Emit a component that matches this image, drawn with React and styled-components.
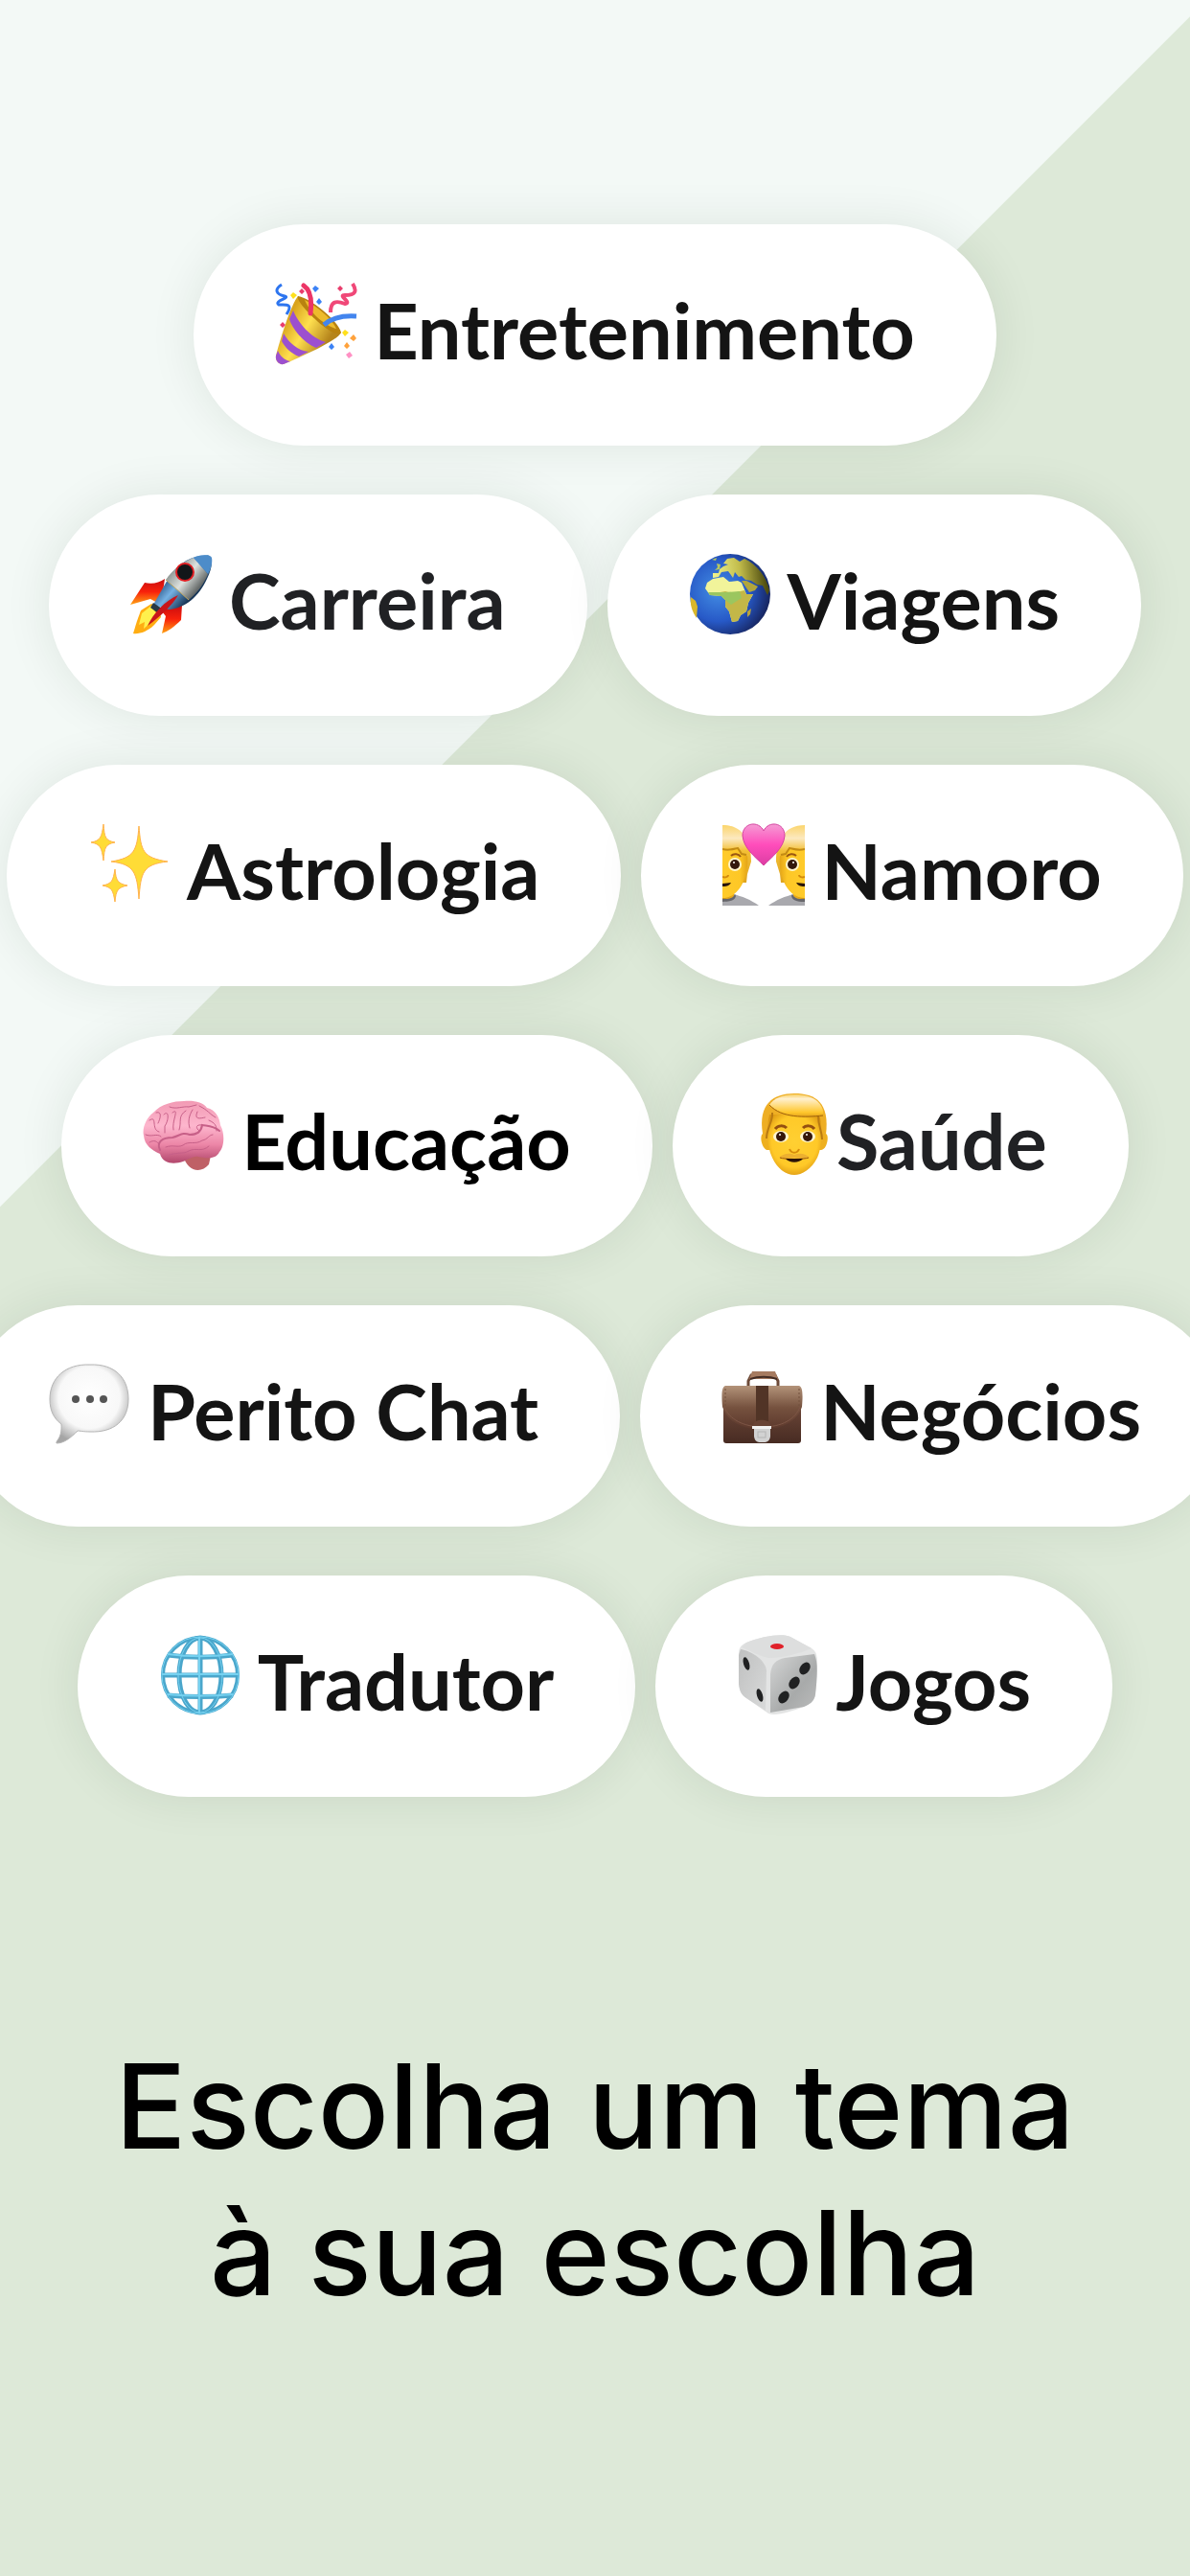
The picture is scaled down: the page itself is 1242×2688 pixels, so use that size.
import React from "react";
import styled, { createGlobalStyle } from "styled-components";

const GlobalStyle = createGlobalStyle`
    body {
        margin: 0;
    }
`

//styled
const Wrapper = styled.div`
    box-sizing: border-box;
    min-height: 100vh;
    padding-top: 234px;
    overflow: hidden;
    background: linear-gradient(135deg, #F3F9F6 890px, #DDE9D8 891px);
`
const TopicList = styled.div`
    display: flex;
    flex-direction: column;
    gap: 51px;
`
const TopicRow = styled.div`
    display: flex;
    justify-content: center;
    gap: 21px;
`
const TopicButton = styled.button`
    display: flex;
    flex-shrink: 0;
    align-items: flex-start;
    gap: ${(props) => (props.$tight ? 0 : 17)}px;
    height: 231px;
    padding: 61px 85px 0;
    border: 0;
    border-radius: 116px;
    background: #FFFFFF;
    box-shadow: 0 0 50px rgba(0, 40, 20, 0.09);
    font-family: Lato, "Open Sans", sans-serif;
    font-size: 81px;
    font-weight: 700;
    line-height: 98px;
    color: ${(props) => props.$color || "#141414"};
    white-space: nowrap;
    cursor: pointer;
`
const Icon = styled.svg`
    flex-shrink: 0;
    width: 86px;
    height: 86px;
`
const Title = styled.h1`
    margin: 246px 0 0;
    font-family: Inter, Roboto, sans-serif;
    font-size: 123px;
    font-weight: 500;
    line-height: 153px;
    text-align: center;
    color: #000000;
`

function PartyIcon() {
    return (
        <Icon viewBox="0 0 86 86" fill="none">
            <defs>
                <linearGradient id="cone" x1="8" y1="45" x2="50" y2="70" gradientUnits="userSpaceOnUse">
                    <stop offset="0" stopColor="#D9A31D" />
                    <stop offset="0.45" stopColor="#FFE04F" />
                    <stop offset="1" stopColor="#B5841B" />
                </linearGradient>
            </defs>
            <path d="M24 14L69 52C66 60 26 78 9 85C4 86 0 81 1 76C7 53 17 23 24 14Z" fill="url(#cone)" />
            <path d="M24 14C35 15 66 39 69 52C65 56 54 49 44 40C33 30 22 18 24 14Z" fill="#B8820F" />
            <path d="M31 18C43 24 59 37 64 48C57 47 38 35 31 18Z" fill="#EDBB2C" />
            <path d="M19 29C24 42 38 58 53 62L43 68C29 62 18 48 15 38Z" fill="#9C50CF" />
            <path d="M9 53C14 62 24 71 35 72L25 77C17 74 10 67 7 61Z" fill="#9C50CF" />
            <path d="M3 71C5 76 10 81 16 82L9 85C4 86 0 81 1 76Z" fill="#9C50CF" />
            <path d="M7 2C-1 7 1 12 10 14C17 16 -2 19 4 23C10 23 20 21 12 33" stroke="#2D75EF" strokeWidth="3" />
            <path d="M30 3C39 9 38 24 37 32" stroke="#EC3566" strokeWidth="5" strokeLinecap="round" />
            <path d="M81 1C86 9 84 13 73 13C65 13 81 21 73 22C63 18 58 20 58 31" stroke="#F04878" strokeWidth="4" />
            <path d="M51 44C59 37 71 34 85 35" stroke="#4385EE" strokeWidth="5" />
            <path d="M28 6l3 3-3 3-3-3zM68 3l3 3-3 3-3-3zM8 41l3 3-3 3-3-3z" fill="#E93D6D" />
            <path d="M42 3l4 3-4 4-3-4zM46 16l3 4-3 3-3-3zM59 63l3 4-3 3-3-3z" fill="#3B82F6" />
            <path d="M19 10l4 3-4 4-3-4zM73 49l4 3-4 4-3-4z" fill="#FFE01C" />
            <path d="M82 54l3 4-3 3-4-3zM75 62l3 4-3 3-3-3z" fill="#FFA23C" />
            <path d="M78 72l3 4-4 3-3-4z" fill="#FF91C4" />
        </Icon>
    )
}

function RocketIcon() {
    return (
        <Icon viewBox="0 0 86 86" fill="none">
            <defs>
                <linearGradient id="hull" x1="40" y1="22" x2="66" y2="43" gradientUnits="userSpaceOnUse">
                    <stop offset="0" stopColor="#8D9592" />
                    <stop offset="0.5" stopColor="#DDE1DE" />
                    <stop offset="1" stopColor="#656A69" />
                </linearGradient>
                <linearGradient id="hullBlue" x1="32" y1="34" x2="56" y2="55" gradientUnits="userSpaceOnUse">
                    <stop offset="0" stopColor="#315D8E" />
                    <stop offset="0.4" stopColor="#75B1E3" />
                    <stop offset="1" stopColor="#183657" />
                </linearGradient>
                <linearGradient id="fin" x1="0" y1="0" x2="0" y2="1">
                    <stop offset="0" stopColor="#C80C10" />
                    <stop offset="0.5" stopColor="#F8210B" />
                    <stop offset="1" stopColor="#FFA313" />
                </linearGradient>
            </defs>
            <path d="M36 27C30 31 23 33 15 31L0 54L21 48L32 54Z" fill="url(#fin)" />
            <path d="M54 54L53 70C46 77 39 82 33 84L37 66L30 57Z" fill="url(#fin)" />
            <path d="M22 53L11 60L7 71L3 84C9 85 18 82 25 75L32 67L30 57Z" fill="#FFAD12" />
            <path d="M22 55L12 63L9 75L15 72L14 79L29 66Z" fill="#FFF04D" />
            <path d="M40 26C50 10 65 2 81 2C87 4 86 15 80 27C72 45 57 58 40 59L24 54Z" fill="url(#hullBlue)" />
            <path d="M37 28C44 18 54 9 66 5L81 22C76 34 69 42 61 49Z" fill="url(#hull)" />
            <path d="M66 5C75 1 84 2 85 5C86 10 84 17 81 22Z" fill="#4D8CC9" />
            <circle cx="57" cy="20" r="10" fill="#E01D22" />
            <circle cx="57" cy="20" r="8" fill="#121619" />
            <path d="M37 28L61 49" stroke="#BFA45C" strokeWidth="1" />
            <path d="M24 52L33 58L29 63L21 57Z" fill="#273945" />
            <path d="M50 44C44 54 33 65 18 76C24 63 36 50 50 44Z" fill="#C9151A" />
        </Icon>
    )
}

function EarthIcon() {
    return (
        <Icon viewBox="0 0 86 86" fill="none">
            <defs>
                <radialGradient id="sea" cx="0.35" cy="0.45" r="0.65">
                    <stop offset="0" stopColor="#448FE4" />
                    <stop offset="0.6" stopColor="#2759C7" />
                    <stop offset="1" stopColor="#172662" />
                </radialGradient>
                <linearGradient id="land" x1="28" y1="30" x2="80" y2="24" gradientUnits="userSpaceOnUse">
                    <stop offset="0" stopColor="#EDF08A" />
                    <stop offset="0.5" stopColor="#C2BC4B" />
                    <stop offset="1" stopColor="#4F4D10" />
                </linearGradient>
            </defs>
            <circle cx="43" cy="43" r="42" fill="url(#sea)" />
            <path d="M25 26L25 21L31 21L32 17L36 14L41 12L36 11L40 6L47 5L53 9L58 6C71 12 81 25 84 39L82 44L77 34L71 33L65 29L59 28L55 24L52 25L48 20L46 26L41 19L34 20L31 25Z" fill="url(#land)" />
            <path d="M29 11l4 1-1 5-5 1 3-3zM24 7l5-2-1 3z" fill="#B5C661" />
            <path d="M25 27L36 25L42 30L51 29L55 31L60 43L67 43L62 52L60 61L54 65L51 71L45 72L42 61L38 56L38 49L34 45L22 44L17 37L19 31Z" fill="#F1F49A" />
            <path d="M22 43L38 40L45 42L58 39L60 43L67 43L62 52L60 61L54 65L51 71L45 72L42 61L38 56L38 49L34 45Z" fill="#C3B748" />
            <path d="M38 41L53 40L55 47L44 54L38 49L34 45L22 44L20 41Z" fill="#9BC65F" />
            <path d="M65 58l-1 6-3 3 0-6z" fill="#B8A33C" />
            <path d="M55 29L63 41L69 39L72 35L64 31L60 29Z" fill="#B2A63B" />
            <path d="M2 46L7 50L9 56L8 68C3 61 1 53 2 46Z" fill="#D9B72B" />
        </Icon>
    )
}

function SparklesIcon() {
    return (
        <Icon viewBox="0 0 86 86">
            <g fill="#FFDC36" stroke="#FFB24B" strokeWidth="1">
                <path d="M53 3C55 29 57 36 83 40C57 43 55 51 53 79C51 51 48 43 24 40C48 36 51 29 53 3Z" />
                <path d="M16 1C17 15 18 18 28 20C18 22 17 25 16 39C14 25 13 22 3 20C13 18 14 15 16 1Z" />
                <path d="M28 48C29 60 31 63 41 65C31 67 29 70 28 82C26 70 25 67 15 65C25 63 26 60 28 48Z" />
            </g>
        </Icon>
    )
}

function CoupleHalf() {
    return (
        <g>
            <path d="M0 77C4 76 9 74 11 74C20 76 30 80 38 86H0Z" fill="#A9A9AE" />
            <path d="M0 70H12V76C9 80 4 80 0 80Z" fill="#E9A917" />
            <path d="M0 78C5 80 11 79 13 74L14 76C13 82 4 82 0 82Z" fill="#66666B" />
            <path d="M0 2C22 2 30 19 30 40L26 53L25 62H20C15 73 7 79 0 79Z" fill="url(#hair)" />
            <path d="M0 27L15 26L20 32L26 34C28 49 21 78 0 78Z" fill="url(#skin)" />
            <path d="M0 27C8 29 14 26 16 26L20 32L25 33" stroke="#C38B14" strokeWidth="2" fill="none" />
            <circle cx="13" cy="43" r="7" fill="#FFF4CB" />
            <circle cx="13" cy="43" r="5" fill="#33180C" />
            <circle cx="12" cy="41" r="1" fill="#FFFFFF" />
            <path d="M9 34C12 31 17 32 19 35" stroke="#9A5712" strokeWidth="2" fill="none" />
            <path d="M0 56C3 57 6 56 6 54" stroke="#D38A0B" strokeWidth="2" fill="none" />
            <path d="M0 63L9 62C7 66 3 66 0 66Z" fill="#281408" />
        </g>
    )
}

function CoupleIcon() {
    return (
        <Icon viewBox="0 0 86 86">
            <defs>
                <linearGradient id="hair" x1="0" y1="0" x2="0" y2="1">
                    <stop offset="0" stopColor="#FBD56C" />
                    <stop offset="0.18" stopColor="#FCE9C0" />
                    <stop offset="0.35" stopColor="#F3BF35" />
                    <stop offset="1" stopColor="#D49612" />
                </linearGradient>
                <linearGradient id="skin" x1="0" y1="0" x2="1" y2="0">
                    <stop offset="0" stopColor="#FFCB2B" />
                    <stop offset="0.7" stopColor="#FDC726" />
                    <stop offset="1" stopColor="#E4A416" />
                </linearGradient>
                <linearGradient id="heart" x1="0" y1="0" x2="0" y2="1">
                    <stop offset="0" stopColor="#F59BD4" />
                    <stop offset="0.5" stopColor="#FF4DBB" />
                    <stop offset="1" stopColor="#DC3DA3" />
                </linearGradient>
            </defs>
            <CoupleHalf />
            <g transform="translate(86 0) scale(-1 1)">
                <CoupleHalf />
            </g>
            <path d="M43 8C38 -3 21 -1 21 13C22 26 34 35 43 44C52 35 64 26 65 13C65 -1 48 -3 43 8Z" fill="url(#heart)" stroke="#D4429F" strokeWidth="1" />
        </Icon>
    )
}

function BrainIcon() {
    return (
        <Icon viewBox="0 0 86 86" fill="none">
            <defs>
                <linearGradient id="brain" x1="0" y1="0" x2="0" y2="1">
                    <stop offset="0" stopColor="#F29AB4" />
                    <stop offset="0.4" stopColor="#FDB6CD" />
                    <stop offset="0.7" stopColor="#EC86A7" />
                    <stop offset="1" stopColor="#B2476C" />
                </linearGradient>
            </defs>
            <path d="M42 64C46 82 61 84 69 74L72 60Z" fill="#BF6066" />
            <path d="M1 44C-1 36 4 25 11 20C19 11 32 8 43 8C53 7 63 9 67 15C76 17 80 25 81 33C86 42 85 56 80 61C76 70 64 67 58 66C52 65 46 70 42 71C33 74 21 74 18 63C9 59 2 54 1 44Z" fill="url(#brain)" />
            <g stroke="#C76088" strokeWidth="1" strokeLinecap="round">
                <path d="M18 59C14 51 20 46 31 46C39 44 41 40 49 43C57 43 61 40 62 33C68 34 73 33 80 39" strokeWidth="2" />
                <path d="M24 56C32 53 36 57 42 54C48 49 55 54 62 49C68 48 69 43 73 43" />
                <path d="M24 66C34 60 42 64 48 60C56 56 61 62 69 55" />
                <path d="M7 28C16 22 8 38 17 40M14 20C21 18 18 27 16 31M22 22C28 16 27 29 23 34V41M31 20C39 14 30 29 32 38M45 18C36 24 41 29 38 38M52 17C48 23 47 30 49 36M57 19C53 28 60 26 65 25" />
                <path d="M28 14C35 17 42 13 48 14L56 12M59 13C69 18 69 21 76 25M3 43C9 46 15 41 19 45M7 51C12 48 15 50 17 53M62 33C55 32 55 36 59 39M69 28C76 31 77 34 77 39" />
            </g>
        </Icon>
    )
}

function ManIcon() {
    return (
        <Icon viewBox="0 0 86 86">
            <defs>
                <radialGradient id="face" cx="0.5" cy="0.45" r="0.6">
                    <stop offset="0" stopColor="#FFD032" />
                    <stop offset="0.7" stopColor="#FFC928" />
                    <stop offset="1" stopColor="#DC9712" />
                </radialGradient>
                <linearGradient id="fringe" x1="0" y1="0" x2="0" y2="1">
                    <stop offset="0" stopColor="#F8D067" />
                    <stop offset="0.2" stopColor="#FFF0CF" />
                    <stop offset="0.8" stopColor="#FFC72C" />
                    <stop offset="1" stopColor="#E4A31B" />
                </linearGradient>
            </defs>
            <path d="M9 42C5 45 9 60 15 59L70 59C76 59 79 44 75 42Z" fill="#EEB01F" />
            <path d="M9 42C4 11 20 0 42 0C65 0 79 10 75 43L72 50H13Z" fill="#EEAE24" />
            <path d="M16 22H68C72 34 71 57 66 67C60 79 50 85 42 85C33 85 24 78 19 67C13 55 13 34 16 22Z" fill="url(#face)" />
            <path d="M16 12C24 -2 55 -2 66 8C71 13 73 18 72 23C58 25 32 27 16 12Z" fill="url(#fringe)" />
            <path d="M16 12C29 26 53 25 72 23" stroke="#9E610B" strokeWidth="1" fill="none" />
            <path d="M19 20C20 29 13 36 13 47M67 24C67 34 71 39 71 48" stroke="#B97A12" strokeWidth="2" fill="none" />
            <path d="M22 37C25 33 31 33 34 36M51 36C54 33 60 33 63 37" stroke="#955010" strokeWidth="3" fill="none" />
            <ellipse cx="28" cy="45" rx="8" ry="6" fill="#FFF5D0" />
            <ellipse cx="56" cy="45" rx="8" ry="6" fill="#FFF5D0" />
            <circle cx="28" cy="45" r="5" fill="#36180A" />
            <circle cx="56" cy="45" r="5" fill="#36180A" />
            <circle cx="27" cy="43" r="1" fill="#FFFFFF" />
            <circle cx="55" cy="43" r="1" fill="#FFFFFF" />
            <path d="M37 58C39 63 45 63 47 58" stroke="#D68B0C" strokeWidth="2" fill="none" />
            <path d="M26 67C31 62 38 62 42 64C47 62 53 62 58 67C52 69 46 68 42 67C38 68 31 69 26 67Z" fill="#EDB030" />
            <path d="M27 67C32 69 52 69 57 67" stroke="#9C5A0A" strokeWidth="1" fill="none" />
            <path d="M33 68H51C47 73 37 73 33 68Z" fill="#2A1208" />
        </Icon>
    )
}

function ChatIcon() {
    return (
        <Icon viewBox="0 0 86 86">
            <defs>
                <radialGradient id="bubble" cx="0.5" cy="0.42" r="0.6">
                    <stop offset="0" stopColor="#FFFFFF" />
                    <stop offset="0.65" stopColor="#F8F8F8" />
                    <stop offset="1" stopColor="#A5A5A5" />
                </radialGradient>
            </defs>
            <path d="M43 1C69 0 83 15 83 37C83 59 68 72 43 71C36 71 32 70 30 70C23 77 16 83 8 83C7 80 14 78 13 63C5 57 1 49 1 37C1 15 17 0 43 1Z" fill="url(#bubble)" stroke="#B5B5B5" strokeWidth="1" />
            <circle cx="28" cy="37" r="4" fill="#555555" />
            <circle cx="43" cy="37" r="4" fill="#555555" />
            <circle cx="57" cy="37" r="4" fill="#555555" />
        </Icon>
    )
}

function BriefcaseIcon() {
    return (
        <Icon viewBox="0 0 86 86" fill="none">
            <defs>
                <linearGradient id="leather" x1="0" y1="0" x2="0" y2="1">
                    <stop offset="0" stopColor="#B39379" />
                    <stop offset="0.5" stopColor="#76523F" />
                    <stop offset="1" stopColor="#5C382C" />
                </linearGradient>
                <linearGradient id="base" x1="0" y1="0" x2="0" y2="1">
                    <stop offset="0" stopColor="#6B4638" />
                    <stop offset="1" stopColor="#472B22" />
                </linearGradient>
            </defs>
            <path d="M28 24V18L31 12H56L59 18V24" stroke="#6D4A38" strokeWidth="3" />
            <path d="M29 16L32 8H56L59 16Z" fill="#A67B60" />
            <path d="M30 16C38 13 50 13 58 16" stroke="#432C23" strokeWidth="2" />
            <path d="M2 45H83V80Q83 83 80 83H5Q2 83 2 80Z" fill="url(#base)" />
            <path d="M4 23H81C85 24 85 33 84 45C79 60 63 69 43 68C22 69 6 60 1 45C0 33 0 24 4 23Z" fill="url(#leather)" />
            <path d="M3 45C8 58 23 66 43 66C63 66 77 58 82 45" stroke="#7E5646" strokeWidth="1" />
            <path d="M4 26V45M81 26V45" stroke="#72503D" strokeWidth="1" strokeDasharray="2 2" />
            <rect x="36" y="23" width="13" height="37" fill="#513426" />
            <path d="M33 68V64C34 57 50 57 51 64V68Z" fill="#684335" />
            <path d="M34 67H51V76C50 82 46 82 43 82C38 82 35 82 34 76Z" fill="#D2D2D2" />
            <rect x="32" y="65" width="20" height="3" fill="#F2F2F2" />
            <rect x="38" y="71" width="8" height="6" stroke="#B4B4B4" />
        </Icon>
    )
}

function GlobeIcon() {
    return (
        <Icon viewBox="0 0 86 86" fill="none">
            <g stroke="#4AA6CB" strokeWidth="5">
                <circle cx="43" cy="43" r="39" strokeWidth="4" />
                <ellipse cx="43" cy="43" rx="22" ry="39" />
                <path d="M43 3V83M3 43H83M9 22C31 25 55 25 77 22M9 64C31 66 55 66 77 64" />
            </g>
            <g stroke="#75D1F0" strokeWidth="2">
                <circle cx="43" cy="43" r="40" strokeWidth="1" />
                <ellipse cx="43" cy="43" rx="23" ry="39" strokeWidth="1" />
                <path d="M42 3V83M3 42H83M9 21C31 24 55 24 77 21M9 63C31 65 55 65 77 63" />
            </g>
        </Icon>
    )
}

function DiceIcon() {
    return (
        <Icon viewBox="0 0 86 86">
            <defs>
                <linearGradient id="diceRight" x1="0" y1="0" x2="1" y2="1">
                    <stop offset="0" stopColor="#D5D6D6" />
                    <stop offset="0.6" stopColor="#A8AAAA" />
                    <stop offset="1" stopColor="#BCBDBD" />
                </linearGradient>
                <linearGradient id="diceLeft" x1="0" y1="0" x2="1" y2="1">
                    <stop offset="0" stopColor="#BFC0C0" />
                    <stop offset="1" stopColor="#D9DADA" />
                </linearGradient>
            </defs>
            <path d="M10 9C27 2 48 -1 56 3L78 15C84 19 84 24 84 33L82 63C81 70 77 73 70 76C56 81 41 86 33 83L10 67C4 63 3 59 2 52L2 22C2 14 4 12 10 9Z" fill="#E3E4E4" />
            <path d="M4 16C12 17 29 25 31 38L30 80L10 67C4 63 3 59 2 52V22Z" fill="url(#diceLeft)" />
            <path d="M35 42C36 31 41 27 50 25L81 21C85 30 84 45 82 63C81 70 77 73 70 76L35 82Z" fill="url(#diceRight)" />
            <path d="M10 9C27 2 48 -1 56 3L78 15C67 20 48 25 34 25C24 24 13 17 5 14Z" fill="#DDDEDE" />
            <ellipse cx="42" cy="13" rx="7" ry="3" fill="#E02129" />
            <g fill="#202122">
                <ellipse cx="10" cy="31" rx="3" ry="7" transform="rotate(-16 10 31)" />
                <ellipse cx="24" cy="64" rx="3" ry="7" transform="rotate(-16 24 64)" />
                <ellipse cx="71" cy="36" rx="5" ry="7" transform="rotate(35 71 36)" />
                <ellipse cx="60" cy="51" rx="5" ry="7" transform="rotate(35 60 51)" />
                <ellipse cx="49" cy="66" rx="5" ry="7" transform="rotate(35 49 66)" />
            </g>
        </Icon>
    )
}

const topicRows = [
    [{ label: "Entretenimento", icon: PartyIcon }],
    [
        { label: "Carreira", icon: RocketIcon, color: "#202124" },
        { label: "Viagens", icon: EarthIcon },
    ],
    [
        { label: "Astrologia", icon: SparklesIcon },
        { label: "Namoro", icon: CoupleIcon },
    ],
    [
        { label: "Educação", icon: BrainIcon, color: "#000000" },
        { label: "Saúde", icon: ManIcon, color: "#202124", tight: true },
    ],
    [
        { label: "Perito Chat", icon: ChatIcon },
        { label: "Negócios", icon: BriefcaseIcon },
    ],
    [
        { label: "Tradutor", icon: GlobeIcon },
        { label: "Jogos", icon: DiceIcon },
    ],
]

function App() {

    return (

        <Wrapper>
            <GlobalStyle />
            <TopicList>
                {topicRows.map((row) => (
                    <TopicRow key={row[0].label}>
                        {row.map(({ label, icon: TopicIcon, color, tight }) => (
                            <TopicButton key={label} type="button" $color={color} $tight={tight}>
                                <TopicIcon />
                                <span>{label}</span>
                            </TopicButton>
                        ))}
                    </TopicRow>
                ))}
            </TopicList>
            <Title>Escolha um tema<br />à sua escolha</Title>
        </Wrapper>

    )

}

export default App;
